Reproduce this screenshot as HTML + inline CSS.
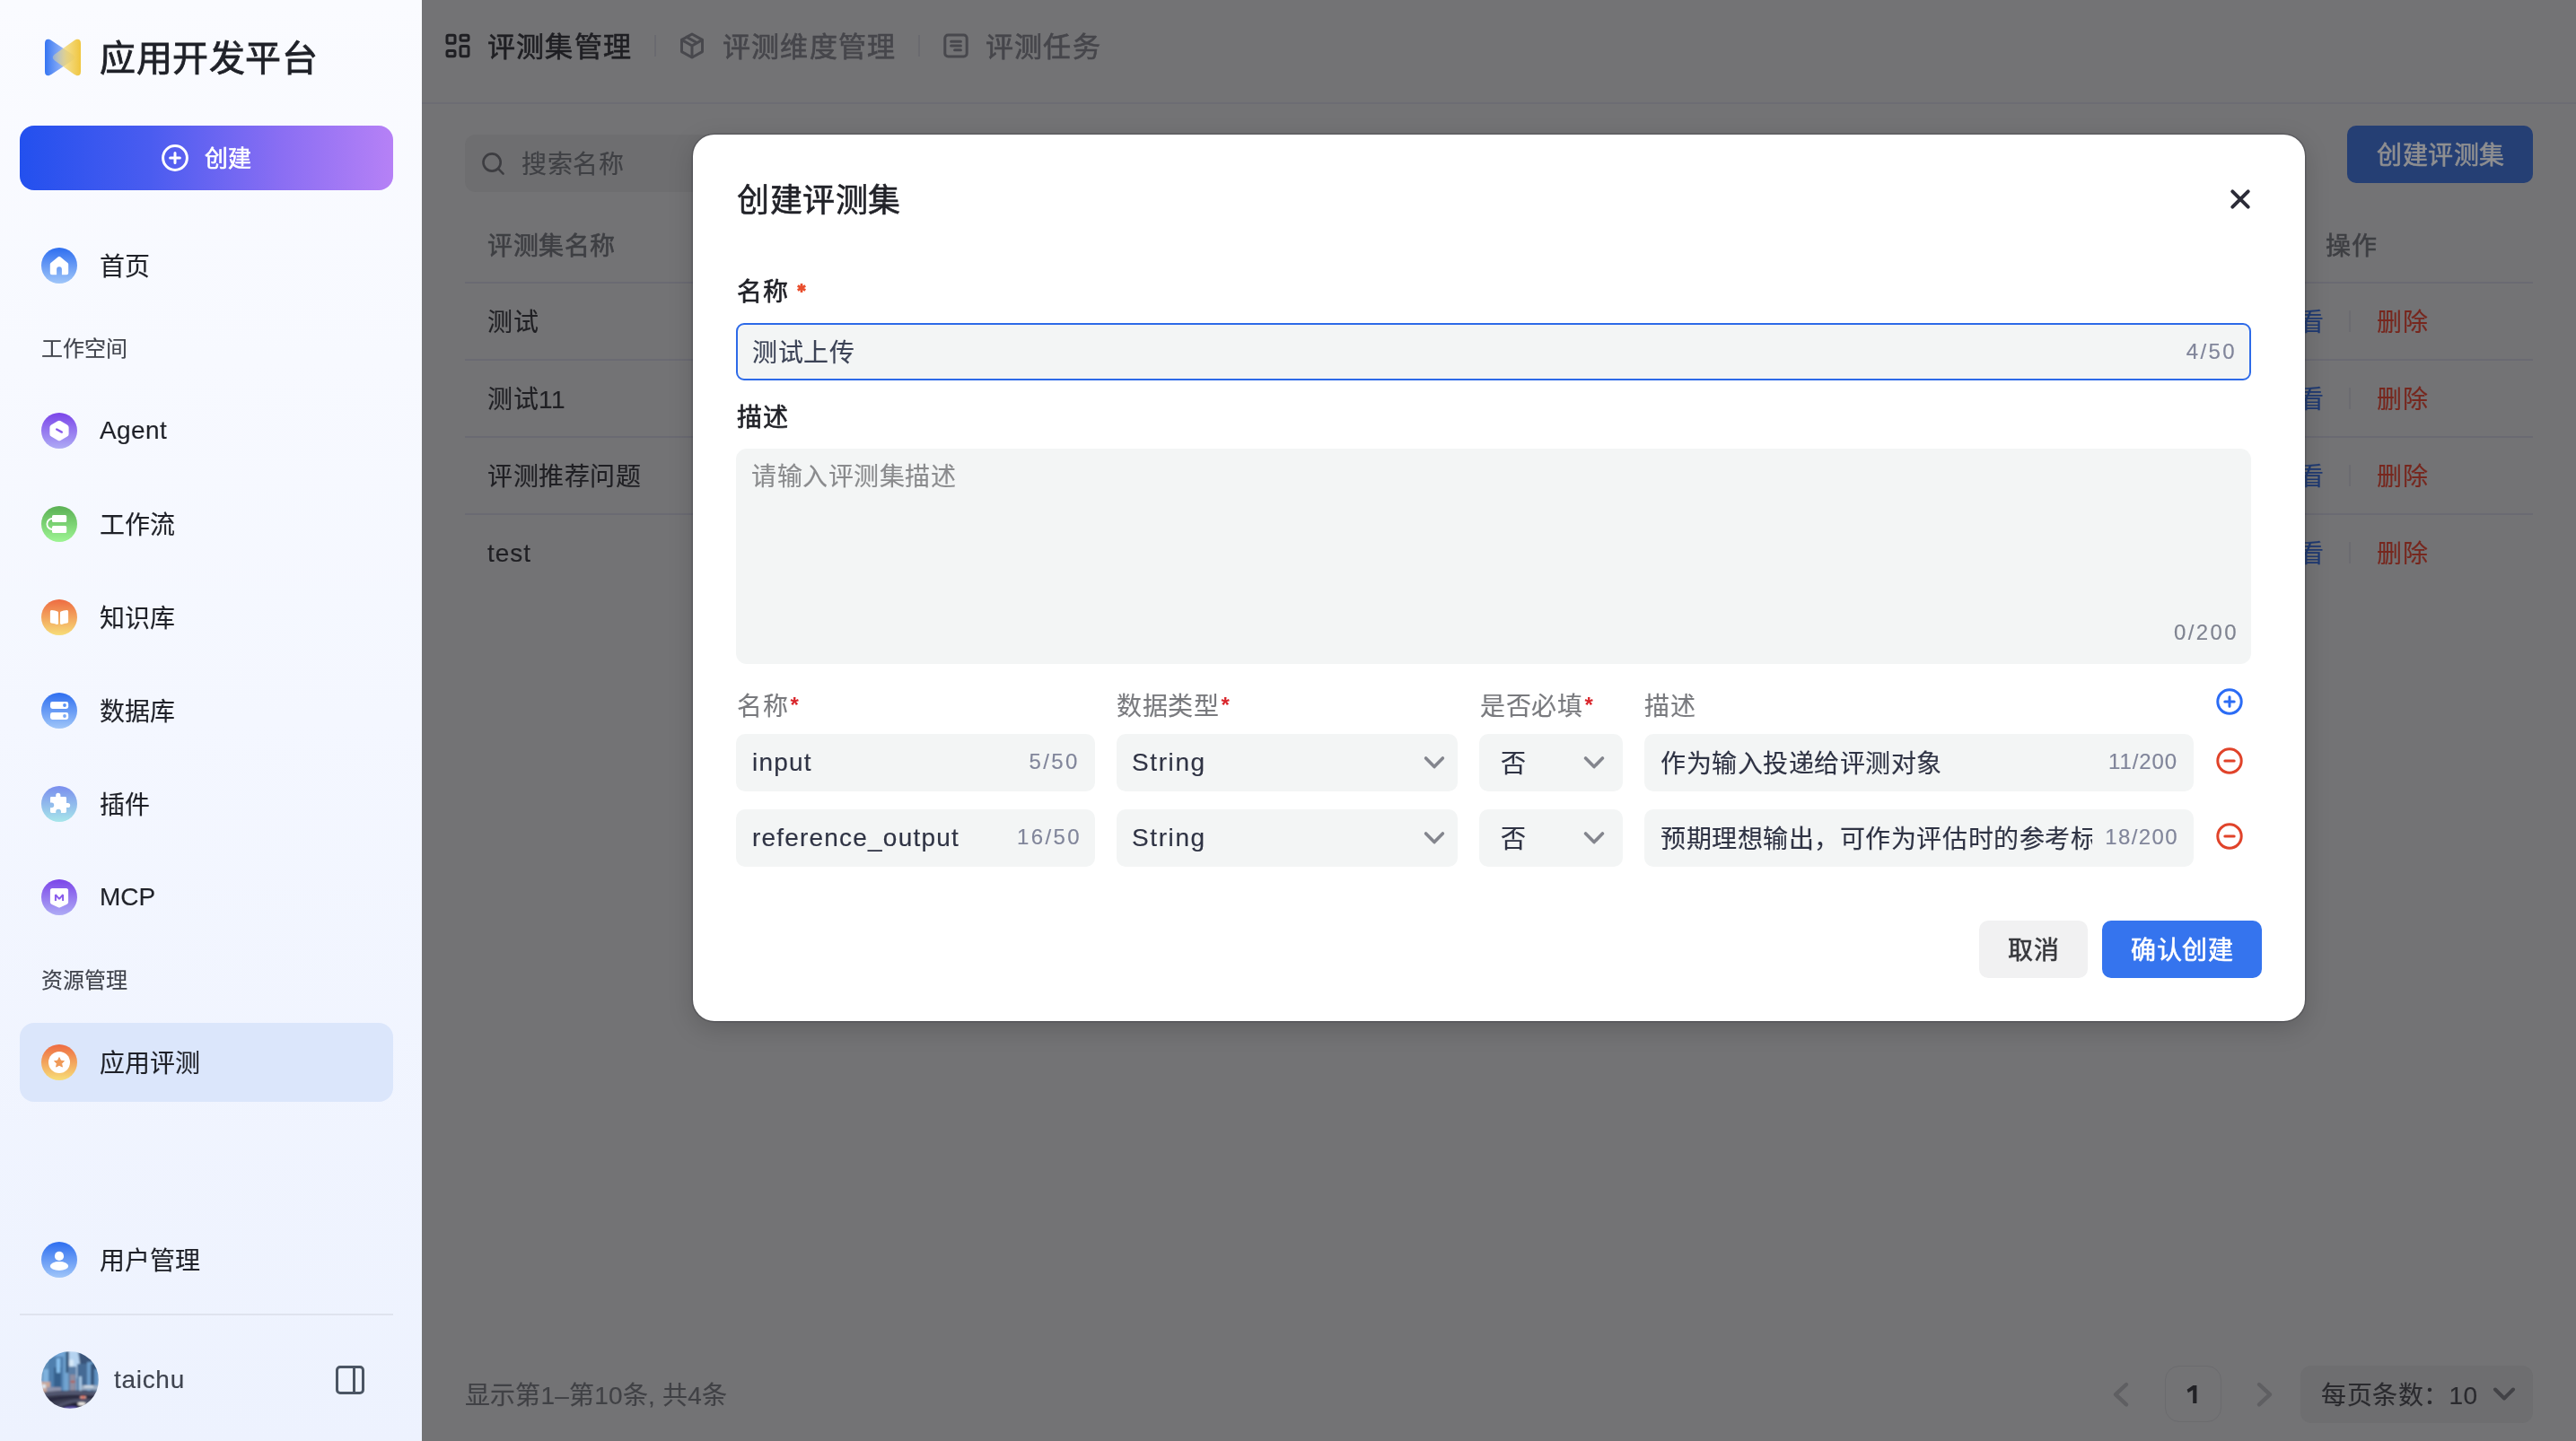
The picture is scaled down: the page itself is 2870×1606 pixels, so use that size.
<!DOCTYPE html>
<html lang="zh-CN">
<head>
<meta charset="utf-8">
<title>应用开发平台</title>
<style>
*{box-sizing:border-box;margin:0;padding:0}
html,body{width:2870px;height:1606px;overflow:hidden;background:#737375}
body{font-family:"Liberation Sans",sans-serif;position:relative;color:#1f2128}
#wrap{position:absolute;left:0;top:0;width:2870px;height:1606px;will-change:transform}
.abs{position:absolute}
.t{position:absolute;white-space:nowrap;line-height:1;transform:translateY(-50%);margin-top:2px;letter-spacing:.5px;-webkit-text-stroke:.15px currentColor}
.m{-webkit-text-stroke:.6px currentColor}
.la{margin-top:0}
/* ---------- sidebar ---------- */
#sb{position:absolute;left:0;top:0;width:470px;height:1606px;background:linear-gradient(180deg,#fafbff 0%,#f4f7ff 50%,#edf2fe 100%)}
#sb .nav{font-size:28px;left:110.5px;color:#1f2128;letter-spacing:.2px}
#sb .sec{font-size:24px;left:46px;color:#41444d;margin-top:1px;letter-spacing:0}
#sb .ic{position:absolute;left:46px;width:40px;height:40px}
#brand{left:111px;top:63px;font-size:40px;font-weight:400;color:#1f2128;letter-spacing:.6px;-webkit-text-stroke:.85px #1f2128}
#create{position:absolute;left:22px;top:140px;width:416px;height:72px;border-radius:16px;background:linear-gradient(90deg,#2350ee 0%,#4a5cf0 35%,#8a6ef3 70%,#b681f6 100%)}
#active{position:absolute;left:22px;top:1140px;width:416px;height:88px;border-radius:16px;background:#dbe6fb}
/* ---------- main (dimmed) ---------- */
#main{position:absolute;left:470px;top:0;width:2400px;height:1606px;background:#737375}
#hdrline{position:absolute;left:0;top:114px;width:2400px;height:2px;background:#6c6c73}
.tab{font-size:31px;font-weight:400;top:50px;letter-spacing:1.2px;-webkit-text-stroke:.65px currentColor}
.row{font-size:28px;color:#1f1f23;left:73px}
.rline{position:absolute;left:48px;width:2304px;height:2px;background:#6a6a72}
.del{font-size:28px;color:#77271e;left:2178px}
.look{font-size:28px;color:#1f3a72;left:2062px}
.vsep{position:absolute;left:2147px;width:2px;height:24px;background:#6b6b70}
/* ---------- modal ---------- */
#modal{position:absolute;left:772px;top:150px;width:1796px;height:988px;border-radius:24px;background:#fff;box-shadow:0 0 0 1.5px rgba(40,40,48,.26),0 8px 28px rgba(0,0,0,.17)}
#modal .t{color:#212228}
.fld{position:absolute;background:#f3f5f5;border-radius:10px}
.cnt{font-size:24px;color:#80859a !important;letter-spacing:2.4px}
.val{font-size:28px;color:#2f3344 !important;letter-spacing:1.2px}
.col{font-size:28px;color:#797a7e !important;top:636px}
.col i{font-style:normal;color:#d9262c;font-size:24px;font-weight:700;position:relative;top:-3.5px;margin-left:2.5px;letter-spacing:0;-webkit-text-stroke:0}
</style>
</head>
<body>
<div id="wrap">
<!-- ======================= SIDEBAR ======================= -->
<div id="sb">
  <svg class="abs" style="left:50px;top:43px" width="40" height="42" viewBox="0 0 40 42">
    <defs>
      <linearGradient id="lgb" x1="0" x2="1" y1="0" y2="0"><stop offset="0" stop-color="#3474f2"/><stop offset=".5" stop-color="#6f9bf5" stop-opacity=".85"/><stop offset="1" stop-color="#9dbaf8" stop-opacity=".45"/></linearGradient>
      <linearGradient id="lgy" x1="1" x2="0" y1="0" y2="0"><stop offset="0" stop-color="#f0c53d"/><stop offset=".5" stop-color="#f2d467" stop-opacity=".8"/><stop offset="1" stop-color="#f5e29a" stop-opacity=".35"/></linearGradient>
    </defs>
    <path d="M0 5.5 Q0 0 4.5 .8 Q6 1.2 7.5 2.2 L32 18.5 Q35 21 32 23.5 L7.5 39.8 Q6 40.8 4.5 41.2 Q0 42 0 36.5 Z" fill="url(#lgb)"/>
    <path d="M40 5.5 Q40 0 35.5 .8 Q34 1.2 32.5 2.2 L11 17.5 Q6.5 21 11 24.5 L32.5 39.8 Q34 40.8 35.5 41.2 Q40 42 40 36.5 Z" fill="url(#lgy)"/>
  </svg>
  <div id="brand" class="t">应用开发平台</div>

  <div id="create">
    <svg class="abs" style="left:157px;top:20px" width="32" height="32" viewBox="0 0 32 32" fill="none" stroke="#fff" stroke-width="3" stroke-linecap="round"><circle cx="16" cy="16" r="13.4"/><path d="M10.6 16h10.8M16 10.6v10.8"/></svg>
    <div class="t m" style="left:205.5px;top:35px;font-size:26px;color:#fff">创建</div>
  </div>

  <!-- nav icons -->
  <svg class="ic" style="top:276px" viewBox="0 0 40 40"><defs><linearGradient id="g1" x1="0" y1="0" x2="0" y2="1"><stop offset="0" stop-color="#2e6ef0"/><stop offset="1" stop-color="#a0c6f9"/></linearGradient></defs><circle cx="20" cy="20" r="20" fill="url(#g1)"/><path d="M20 9.8 Q20.6 9.8 21.2 10.3 L29.4 17 Q30.2 17.7 30.2 18.6 V28.3 Q30.2 30.3 28.2 30.3 H22.9 V24.2 A2.9 2.9 0 0 0 17.1 24.2 V30.3 H11.8 Q9.8 30.3 9.8 28.3 V18.6 Q9.8 17.7 10.6 17 L18.8 10.3 Q19.4 9.8 20 9.8Z" fill="#fff"/></svg>
  <div class="t nav" style="top:296px">首页</div>

  <div class="t sec" style="top:388px">工作空间</div>

  <svg class="ic" style="top:460px" viewBox="0 0 40 40"><defs><linearGradient id="g2" x1="0" y1="0" x2="0" y2="1"><stop offset="0" stop-color="#7b45e9"/><stop offset="1" stop-color="#aeabf5"/></linearGradient></defs><circle cx="20" cy="20" r="20" fill="url(#g2)"/><path d="M18.3 9.2 Q20 8.2 21.7 9.2 L28.9 13.4 Q30.6 14.4 30.6 16.3 V23.7 Q30.6 25.6 28.9 26.6 L21.7 30.8 Q20 31.8 18.3 30.8 L11.1 26.6 Q9.4 25.6 9.4 23.7 V16.3 Q9.4 14.4 11.1 13.4 Z" fill="#fff"/><path d="M17.2 18.5 L22.8 21.6" stroke="#8a5cec" stroke-width="2.4" stroke-linecap="round"/></svg>
  <div class="t nav la" style="top:480px;left:111px;letter-spacing:.4px">Agent</div>

  <svg class="ic" style="top:564px" viewBox="0 0 40 40"><defs><linearGradient id="g3" x1="0" y1="0" x2="0" y2="1"><stop offset="0" stop-color="#5bb054"/><stop offset="1" stop-color="#9df493"/></linearGradient></defs><circle cx="20" cy="20" r="20" fill="url(#g3)"/><rect x="12" y="10" width="16.2" height="8" rx="1.6" fill="#fff"/><rect x="12" y="22" width="16.2" height="8" rx="1.6" fill="#fff"/><path d="M12.4 14 A6 6 0 0 0 12.4 26" fill="none" stroke="#fff" stroke-width="1.8"/></svg>
  <div class="t nav" style="top:584px">工作流</div>

  <svg class="ic" style="top:668px" viewBox="0 0 40 40"><defs><linearGradient id="g4" x1="0" y1="0" x2="0" y2="1"><stop offset="0" stop-color="#ee6b42"/><stop offset="1" stop-color="#f7dd78"/></linearGradient></defs><circle cx="20" cy="20" r="20" fill="url(#g4)"/><path d="M9.9 13.4 Q9.9 11.8 11.5 11.9 Q15.5 12 18.2 13.4 Q19 13.9 19 14.8 V26.6 Q19 28.4 17.3 27.9 Q14.5 27 11.2 26.6 Q9.9 26.4 9.9 25.1Z" fill="#fff"/><path d="M30.1 13.4 Q30.1 11.8 28.5 11.9 Q24.5 12 21.8 13.4 Q21 13.9 21 14.8 V26.6 Q21 28.4 22.7 27.9 Q25.5 27 28.8 26.6 Q30.1 26.4 30.1 25.1Z" fill="#fff"/></svg>
  <div class="t nav" style="top:688px">知识库</div>

  <svg class="ic" style="top:772px" viewBox="0 0 40 40"><circle cx="20" cy="20" r="20" fill="url(#g1)"/><rect x="10" y="10" width="20.2" height="8" rx="2.4" fill="#fff"/><rect x="10" y="22" width="20.2" height="8" rx="2.4" fill="#fff"/><circle cx="26" cy="14" r="1.9" fill="#5a92f4"/><circle cx="26" cy="26" r="1.9" fill="#7aa9f6"/></svg>
  <div class="t nav" style="top:792px">数据库</div>

  <svg class="ic" style="top:876px" viewBox="0 0 40 40"><defs><linearGradient id="g5" x1="0" y1="0" x2="0" y2="1"><stop offset="0" stop-color="#7a8eee"/><stop offset="1" stop-color="#a7e6ea"/></linearGradient></defs><circle cx="20" cy="20" r="20" fill="url(#g5)"/><path d="M11.2 12 H16.2 V10.4 A2.6 2.6 0 0 1 21.4 10.4 V12 H26.6 Q28 12 28 13.4 V18.9 H29.6 A2.6 2.6 0 0 1 29.6 24.1 H28 V28.6 Q28 30 26.6 30 H22 V28.6 A2.9 2.9 0 0 0 16.2 28.6 V30 H11.4 Q10 30 10 28.6 V24.2 H11.4 A2.8 2.8 0 0 0 11.4 18.6 H10 V13.2 Q10 12 11.2 12Z" fill="#fff"/></svg>
  <div class="t nav" style="top:896px">插件</div>

  <svg class="ic" style="top:980px" viewBox="0 0 40 40"><circle cx="20" cy="20" r="20" fill="url(#g2)"/><path d="M12.4 10 H27.6 Q30.1 10 30.1 12.5 V25.2 Q30.1 27.3 28.2 28.1 L21.2 31.3 Q20 31.9 18.8 31.3 L11.8 28.1 Q9.9 27.3 9.9 25.2 V12.5 Q9.9 10 12.4 10Z" fill="#fff"/><path d="M15.9 24.1 V17.2 L20 21.8 L24.1 17.2 V24.1" fill="none" stroke="#8a5cec" stroke-width="2" stroke-linejoin="bevel"/></svg>
  <div class="t nav la" style="top:1000px;left:111px;letter-spacing:0">MCP</div>

  <div class="t sec" style="top:1092px">资源管理</div>

  <div id="active"></div>
  <svg class="ic" style="top:1164px" viewBox="0 0 40 40"><circle cx="20" cy="20" r="20" fill="url(#g4)"/><circle cx="20" cy="20" r="12" fill="#fff"/><path d="M20 14.6 L21.7 18.1 L25.5 18.6 L22.7 21.3 L23.4 25.1 L20 23.2 L16.6 25.1 L17.3 21.3 L14.5 18.6 L18.3 18.1 Z" fill="#ef9a58" stroke="#ef9a58" stroke-width=".9" stroke-linejoin="round"/></svg>
  <div class="t nav" style="top:1184px">应用评测</div>

  <svg class="ic" style="top:1384px" viewBox="0 0 40 40"><circle cx="20" cy="20" r="20" fill="url(#g1)"/><circle cx="20" cy="15.9" r="5.1" fill="#fff"/><ellipse cx="20" cy="27" rx="10.2" ry="5.1" fill="#fff"/></svg>
  <div class="t nav" style="top:1404px">用户管理</div>

  <div class="abs" style="left:22px;top:1464px;width:416px;height:2px;background:#dfe3ee"></div>

  <svg class="abs" style="left:46px;top:1506px" width="64" height="64" viewBox="0 0 64 64">
    <defs>
      <clipPath id="avc"><circle cx="32" cy="32" r="32"/></clipPath>
      <linearGradient id="sky" x1="0" y1="0" x2="0" y2="1"><stop offset="0" stop-color="#6fa3d6"/><stop offset=".55" stop-color="#8fb4d8"/><stop offset="1" stop-color="#a9b4c9"/></linearGradient>
      <linearGradient id="tw" x1="0" y1="0" x2="0" y2="1"><stop offset="0" stop-color="#3f6f9f"/><stop offset="1" stop-color="#4d6f92"/></linearGradient>
      <filter id="bl" x="-10%" y="-10%" width="120%" height="120%"><feGaussianBlur stdDeviation=".9"/></filter>
    </defs>
    <g clip-path="url(#avc)"><g filter="url(#bl)">
      <rect width="64" height="64" fill="url(#sky)"/>
      <rect x="30" y="0" width="13" height="30" fill="#b5d3f0"/>
      <rect x="0" y="10" width="16" height="38" fill="#5f8db8"/>
      <rect x="2" y="20" width="9" height="20" fill="#7fb2de"/>
      <rect x="8" y="6" width="18" height="42" fill="#4f7fae"/>
      <rect x="14" y="18" width="8" height="24" fill="#35608d"/>
      <rect x="17" y="8" width="4" height="16" fill="#86c0ee"/>
      <rect x="24.5" y="0" width="5" height="46" fill="#6ea2cf"/>
      <rect x="27.5" y="0" width="3.2" height="24" fill="#2f4f74"/>
      <rect x="31" y="9" width="5" height="8" rx="2" fill="#d5e8f8"/>
      <rect x="30" y="17" width="9" height="30" fill="#5a7ea6"/>
      <rect x="32" y="26" width="6" height="18" fill="#8f8da0"/>
      <rect x="32.5" y="33" width="5" height="2" fill="#b05a4f"/>
      <path d="M41 0 L64 8 V22 L44 20 Z" fill="#3b557a"/>
      <rect x="40" y="14" width="12" height="34" fill="#456a94"/>
      <rect x="42" y="28" width="3" height="16" fill="#a6c7e6"/>
      <rect x="51" y="12" width="7" height="34" fill="#6b9ccb"/>
      <rect x="55" y="14" width="9" height="30" fill="#35547c"/>
      <rect x="59" y="20" width="5" height="22" fill="#5d8fc0"/>
      <rect x="0" y="34" width="10" height="12" fill="#c9a79a"/>
      <rect x="1" y="37" width="4" height="4" fill="#dfeaf2"/>
      <rect x="6" y="40" width="16" height="7" fill="#8d93ab"/>
      <rect x="44" y="38" width="20" height="5" fill="#9fb0c6"/>
      <rect x="48" y="38.5" width="10" height="1.6" fill="#e6eef5"/>
      <path d="M0 46 Q32 42 64 45 V64 H0Z" fill="#3d3f55"/>
      <path d="M0 47 Q32 43.5 64 46.5 V49 Q32 46.5 0 50Z" fill="#555a73"/>
      <path d="M4 52 Q30 47 62 50 L60 53 Q30 51 8 57Z" fill="#2b2c3f"/>
      <path d="M14 62 Q34 50 60 54 L56 60 Q38 56 24 64Z" fill="#50526a"/>
      <path d="M18 64 Q30 58 40 57 L44 64Z" fill="#1f1f30"/>
      <ellipse cx="46.5" cy="51.2" rx="3.4" ry="1.5" fill="#e6604a"/>
      <ellipse cx="44.6" cy="51.3" rx="1" ry=".8" fill="#fff3ea"/><ellipse cx="48.6" cy="51.3" rx="1" ry=".8" fill="#fff3ea"/>
      <ellipse cx="45" cy="58.5" rx="4.6" ry="1.8" fill="#f4efe9"/>
      <path d="M22 64 Q30 60 40 62 L40 64Z" fill="#5a4fa8"/>
    </g></g>
  </svg>
  <div class="t la" style="left:127px;top:1538px;font-size:28px;color:#3f4450;letter-spacing:.7px">taichu</div>
  <svg class="abs" style="left:372px;top:1520px" width="36" height="36" viewBox="0 0 36 36" fill="none" stroke="#4b5563" stroke-width="3" stroke-linejoin="round"><rect x="3.5" y="3.5" width="29" height="29" rx="3.5"/><path d="M22.5 3.5v29"/></svg>
</div>

<!-- ======================= MAIN ======================= -->
<div id="main">

  <!-- header tabs (coordinates relative to #main: x-470) -->
  <svg class="abs" style="left:25px;top:36px" width="30" height="30" viewBox="0 0 30 30" fill="none" stroke="#1f1f23" stroke-width="3" stroke-linejoin="round"><rect x="3" y="3.2" width="9" height="9" rx="1.8"/><rect x="18" y="3.2" width="9" height="6" rx="1.8"/><rect x="3" y="20.6" width="9" height="6.2" rx="1.8"/><rect x="18" y="15.4" width="9" height="11.4" rx="1.8"/></svg>
  <div class="t tab" style="left:73px;color:#1f1f23">评测集管理</div>
  <div class="abs" style="left:259px;top:39px;width:2px;height:24px;background:#6a6a6f"></div>
  <svg class="abs" style="left:285px;top:35px" width="32" height="32" viewBox="0 0 32 32" fill="none" stroke="#48484d" stroke-width="3" stroke-linejoin="round" stroke-linecap="round"><path d="M16 3 L27.5 9.4 V22.6 L16 29 L4.5 22.6 V9.4 Z"/><path d="M4.9 9.6 L16 16 L27.1 9.6M16 16 V28.6M10.2 6.4 L21.6 12.8"/></svg>
  <div class="t tab" style="left:335px;color:#46464b">评测维度管理</div>
  <div class="abs" style="left:553px;top:39px;width:2px;height:24px;background:#6a6a6f"></div>
  <svg class="abs" style="left:579px;top:35px" width="32" height="32" viewBox="0 0 32 32" fill="none" stroke="#48484d" stroke-width="3" stroke-linejoin="round" stroke-linecap="round"><rect x="3.8" y="4" width="24.4" height="24" rx="3.6"/><path d="M10.6 11.2 H21.4M10.6 16 H21.4M14.6 20.8 H21.4"/></svg>
  <div class="t tab" style="left:628px;color:#46464b">评测任务</div>
  <div id="hdrline"></div>

  <!-- toolbar -->
  <div class="abs" style="left:48px;top:150px;width:520px;height:64px;border-radius:12px;background:#6e6e70"></div>
  <svg class="abs" style="left:64px;top:167px" width="32" height="32" viewBox="0 0 32 32" fill="none" stroke="#3d3d41" stroke-width="2.6" stroke-linecap="round"><circle cx="14.1" cy="14" r="9.6"/><path d="M21.2 21.2 L26.6 26.6"/></svg>
  <div class="t" style="left:111px;top:182px;font-size:28px;color:#3f4044">搜索名称</div>
  <div class="abs" style="left:2145px;top:140px;width:207px;height:64px;border-radius:10px;background:#253f74"></div>
  <div class="t m" style="left:2178px;top:172px;font-size:28px;color:#8f8f91">创建评测集</div>

  <!-- table -->
  <div class="t m" style="left:73px;top:273px;font-size:28px;color:#3e3f43">评测集名称</div>
  <div class="t m" style="left:2121px;top:273px;font-size:28px;color:#3e3f43">操作</div>
  <div class="rline" style="top:314px"></div>
  <div class="t row" style="top:358px">测试</div>
  <div class="rline" style="top:400px"></div>
  <div class="t row" style="top:444px">测试11</div>
  <div class="rline" style="top:486px"></div>
  <div class="t row" style="top:530px">评测推荐问题</div>
  <div class="rline" style="top:572px"></div>
  <div class="t row la" style="top:617px;letter-spacing:1px">test</div>

  <div class="t look" style="top:358px">查看</div><div class="vsep" style="top:346px"></div><div class="t del" style="top:358px">删除</div>
  <div class="t look" style="top:444px">查看</div><div class="vsep" style="top:432px"></div><div class="t del" style="top:444px">删除</div>
  <div class="t look" style="top:530px">查看</div><div class="vsep" style="top:518px"></div><div class="t del" style="top:530px">删除</div>
  <div class="t look" style="top:616px">查看</div><div class="vsep" style="top:604px"></div><div class="t del" style="top:616px">删除</div>

  <!-- pagination -->
  <div class="t" style="left:48px;top:1554px;font-size:28px;color:#404145;letter-spacing:.2px">显示第1–第10条, 共4条</div>
  <svg class="abs" style="left:1878px;top:1536px" width="30" height="36" viewBox="0 0 30 36" fill="none" stroke="#5f5f62" stroke-width="4.4" stroke-linecap="round" stroke-linejoin="round"><path d="M21 7 L9 18.2 L21 29.4"/></svg>
  <div class="abs" style="left:1942px;top:1522px;width:63px;height:63px;border-radius:16px;border:1.5px solid #6b6b6e"></div>
  <svg class="abs" style="left:1966px;top:1543px" width="14" height="22" viewBox="0 0 14 22"><path d="M7.4 1 H11.4 V21 H7.2 V6 L1.9 9.3 L.6 5.7 Z" fill="#222226"/></svg>
  <svg class="abs" style="left:2038px;top:1536px" width="30" height="36" viewBox="0 0 30 36" fill="none" stroke="#5f5f62" stroke-width="4.4" stroke-linecap="round" stroke-linejoin="round"><path d="M9 7 L21 18.2 L9 29.4"/></svg>
  <div class="abs" style="left:2093px;top:1522px;width:259px;height:64px;border-radius:12px;background:#6e6e70"></div>
  <div class="t" style="left:2116px;top:1554px;font-size:28px;color:#2a2a2e">每页条数：10</div>
  <svg class="abs" style="left:2305px;top:1542px" width="30" height="24" viewBox="0 0 30 24" fill="none" stroke="#424246" stroke-width="4" stroke-linecap="round" stroke-linejoin="round"><path d="M5 6.5 L15 16.5 L25 6.5"/></svg>

</div>

<!-- ======================= MODAL ======================= -->
<div id="modal">

  <div class="t m" style="left:49px;top:72px;font-size:36px">创建评测集</div>
  <svg class="abs" style="left:1708px;top:56px" width="32" height="32" viewBox="0 0 32 32" fill="none" stroke="#2c2c38" stroke-width="4" stroke-linecap="round"><path d="M7.3 7.3 L24.7 24.7M24.7 7.3 L7.3 24.7"/></svg>

  <div class="t m" style="left:49px;top:174px;font-size:28px">名称</div>
  <svg class="abs" style="left:115px;top:165px" width="12" height="12" viewBox="0 0 12 12" fill="none" stroke="#e94f2e" stroke-width="2.7"><path d="M6 1V11M1.7 3.5 L10.3 8.5M10.3 3.5 L1.7 8.5"/></svg>
  <div class="fld" style="left:48px;top:210px;width:1688px;height:64px;border:2px solid #2d6ae8;border-radius:9px"></div>
  <div class="t val" style="left:66px;top:242px;letter-spacing:.6px;color:#3c4356 !important">测试上传</div>
  <div class="t cnt la" style="right:76px;top:242px">4/50</div>

  <div class="t m" style="left:49px;top:314px;font-size:28px">描述</div>
  <div class="fld" style="left:48px;top:350px;width:1688px;height:240px;border-radius:12px"></div>
  <div class="t" style="left:65px;top:380px;font-size:28px;color:#8a8b8d !important">请输入评测集描述</div>
  <div class="t cnt la" style="right:74px;top:555px;color:#7f8390 !important">0/200</div>

  <div class="t col" style="left:49px">名称<i>*</i></div>
  <div class="t col" style="left:472px">数据类型<i>*</i></div>
  <div class="t col" style="left:877px">是否必填<i>*</i></div>
  <div class="t col" style="left:1060px">描述</div>
  <svg class="abs" style="left:1696px;top:616px" width="32" height="32" viewBox="0 0 32 32" fill="none" stroke="#2b6cf5" stroke-width="3" stroke-linecap="round"><circle cx="16" cy="16" r="13.2"/><path d="M10.8 16h10.4M16 10.8v10.4"/></svg>

  <!-- row 1 -->
  <div class="fld" style="left:48px;top:668px;width:400px;height:64px"></div>
  <div class="t val la" style="left:66px;top:700px">input</div>
  <div class="t cnt la" style="left:374.5px;top:699px">5/50</div>
  <div class="fld" style="left:472px;top:668px;width:380px;height:64px"></div>
  <div class="t val la" style="left:489px;top:700px;letter-spacing:1.6px">String</div>
  <svg class="abs chev" style="left:811px;top:688px" width="30" height="24" viewBox="0 0 30 24" fill="none" stroke="#83858d" stroke-width="3.6" stroke-linecap="round" stroke-linejoin="round"><path d="M5.6 7 L15 16.6 L24.4 7"/></svg>
  <div class="fld" style="left:876px;top:668px;width:160px;height:64px"></div>
  <div class="t val" style="left:900px;top:700px;letter-spacing:0">否</div>
  <svg class="abs chev" style="left:989px;top:688px" width="30" height="24" viewBox="0 0 30 24" fill="none" stroke="#83858d" stroke-width="3.6" stroke-linecap="round" stroke-linejoin="round"><path d="M5.6 7 L15 16.6 L24.4 7"/></svg>
  <div class="fld" style="left:1060px;top:668px;width:612px;height:64px"></div>
  <div class="t val" style="left:1078px;top:700px;letter-spacing:.55px">作为输入投递给评测对象</div>
  <div class="t cnt la" style="right:142px;top:699px;letter-spacing:.9px">11/200</div>
  <svg class="abs" style="left:1696px;top:682px" width="32" height="32" viewBox="0 0 32 32" fill="none" stroke="#e0432a" stroke-width="3" stroke-linecap="round"><circle cx="16" cy="16" r="13.2"/><path d="M10.8 16h10.4"/></svg>

  <!-- row 2 -->
  <div class="fld" style="left:48px;top:752px;width:400px;height:64px"></div>
  <div class="t val la" style="left:66px;top:784px">reference_output</div>
  <div class="t cnt la" style="left:361px;top:783px">16/50</div>
  <div class="fld" style="left:472px;top:752px;width:380px;height:64px"></div>
  <div class="t val la" style="left:489px;top:784px;letter-spacing:1.6px">String</div>
  <svg class="abs chev" style="left:811px;top:772px" width="30" height="24" viewBox="0 0 30 24" fill="none" stroke="#83858d" stroke-width="3.6" stroke-linecap="round" stroke-linejoin="round"><path d="M5.6 7 L15 16.6 L24.4 7"/></svg>
  <div class="fld" style="left:876px;top:752px;width:160px;height:64px"></div>
  <div class="t val" style="left:900px;top:784px;letter-spacing:0">否</div>
  <svg class="abs chev" style="left:989px;top:772px" width="30" height="24" viewBox="0 0 30 24" fill="none" stroke="#83858d" stroke-width="3.6" stroke-linecap="round" stroke-linejoin="round"><path d="M5.6 7 L15 16.6 L24.4 7"/></svg>
  <div class="fld" style="left:1060px;top:752px;width:612px;height:64px"></div>
  <div class="abs" style="left:1078px;top:752px;width:481px;height:64px;overflow:hidden"><div class="t val" style="left:0;top:32px;letter-spacing:.55px">预期理想输出，可作为评估时的参考标准答案</div></div>
  <div class="t cnt la" style="right:141px;top:783px;letter-spacing:1.4px">18/200</div>
  <svg class="abs" style="left:1696px;top:766px" width="32" height="32" viewBox="0 0 32 32" fill="none" stroke="#e0432a" stroke-width="3" stroke-linecap="round"><circle cx="16" cy="16" r="13.2"/><path d="M10.8 16h10.4"/></svg>

  <!-- footer buttons -->
  <div class="abs" style="left:1433px;top:876px;width:121px;height:64px;border-radius:10px;background:#f1f1f2"></div>
  <div class="t m" style="left:1465px;top:908px;font-size:28px;color:#38393d !important">取消</div>
  <div class="abs" style="left:1570px;top:876px;width:178px;height:64px;border-radius:10px;background:#3574ee"></div>
  <div class="t m" style="left:1602px;top:908px;font-size:28px;color:#fff !important">确认创建</div>

</div>
</div>
</body>
</html>
